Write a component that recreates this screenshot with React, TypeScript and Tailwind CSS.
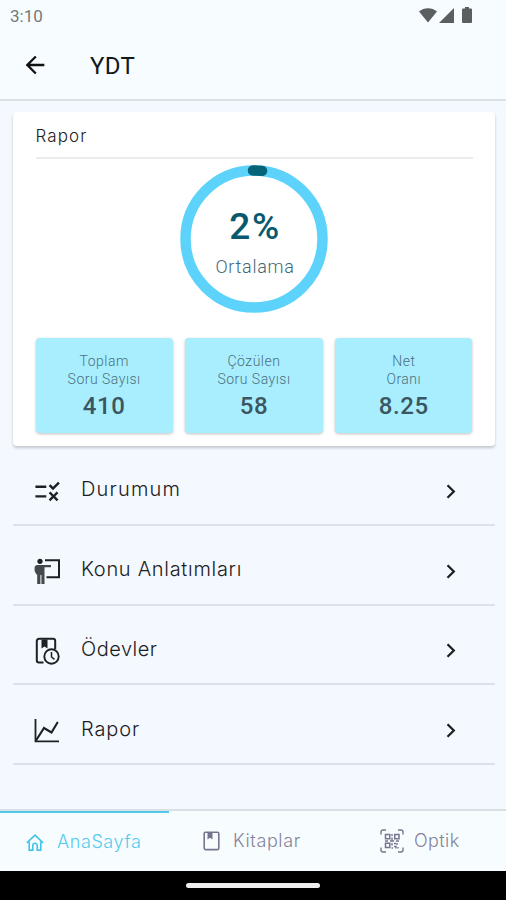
import type { ReactNode } from 'react';
import { MdArrowBack, MdRule } from 'react-icons/md';

type Stat = { top: string; bottom: string; value: string };

type MenuItem = { label: string; icon: ReactNode; spacing: string };

function WifiIcon() {
  return (
    <svg width="18" height="15" viewBox="0 0 18 15" fill="#5b5f60">
      <path d="M0 3.6C2.4 1.3 5.6.2 9 .2s6.600 1.100 9 3.400L9 14.600z" />
    </svg>
  );
}

function SignalIcon() {
  return (
    <svg width="15" height="15" viewBox="0 0 15 15" fill="#5b5f60">
      <path d="M15 0v15H0z" />
    </svg>
  );
}

function BatteryIcon() {
  return (
    <svg width="10" height="16" viewBox="0 0 10 16" fill="#5b5f60">
      <path d="M3 0h4v1.500h2a1 1 0 0 1 1 1V15a1 1 0 0 1-1 1H1a1 1 0 0 1-1-1V2.500a1 1 0 0 1 1-1h2z" />
    </svg>
  );
}

function TrainingIcon() {
  return (
    <svg width="27" height="27" viewBox="0 0 27 27" fill="none">
      <path d="M11 2.200h14v17H12.500" stroke="#1c2124" strokeWidth="2" />
      <circle cx="6" cy="3.300" r="2.600" fill="#1c2124" />
      <path
        d="M3.500 7H17v2.300h-6.500V26H7.400v-9h-1v9H3.200V16.500H2.500L.6 13V9.500Q.8 7 3.500 7z"
        fill="#43494c"
      />
    </svg>
  );
}

function BookClockIcon() {
  return (
    <svg width="25" height="28" viewBox="0 0 25 28" fill="none" stroke="#1c2124" strokeWidth="2">
      <path d="M8.500 25.500H4A2.200 2.200 0 0 1 1.800 23.300V4A2.200 2.200 0 0 1 4 1.800h14A2.200 2.200 0 0 1 20.200 4v8" />
      <path d="M6.500 2.500h6v9l-3-2-3 2z" fill="#1c2124" stroke="none" />
      <circle cx="16.500" cy="19.500" r="7.200" strokeWidth="1.900" />
      <path d="M16.500 15v5l3 2.300" strokeWidth="1.500" />
    </svg>
  );
}

function ChartIcon() {
  return (
    <svg width="26" height="24" viewBox="0 0 26 24" fill="none" stroke="#1c2124">
      <path d="M1.500 0v22.300H25" strokeWidth="1.800" />
      <path d="M2 21.500l8-12.500 7.500 4.500 6.300-10.500" strokeWidth="2.100" />
    </svg>
  );
}

function HomeIcon() {
  return (
    <svg width="18" height="17" viewBox="0 0 18 17" fill="none" stroke="#45c3e8" strokeWidth="1.600">
      <path d="M.8 8.800L9 1.200l8.200 7.600" />
      <path d="M3.200 7.500v8.600h3.600v-4.600a2.200 2.200 0 0 1 4.400 0v4.600h3.600V7.500" />
    </svg>
  );
}

function BookIcon() {
  return (
    <svg width="17" height="20" viewBox="0 0 17 20" fill="none">
      <rect x="1.200" y="1.200" width="14.600" height="17.400" rx="1.300" stroke="#77758d" strokeWidth="1.600" />
      <path d="M4.500 1.500h5v7L7 6.700 4.500 8.500z" fill="#77758d" />
    </svg>
  );
}

function QrIcon() {
  return (
    <svg width="24" height="24" viewBox="0 0 24 24" fill="none" stroke="#77758d" strokeWidth="1.400">
      <path d="M1 5.500V3a2 2 0 0 1 2-2h3M18 1h3a2 2 0 0 1 2 2v2.500M1 18.500V21a2 2 0 0 0 2 2h3M18 23h3a2 2 0 0 0 2-2v-2.500" />
      <path d="M5.500 5.500h4.300v4.300H5.500zM14.700 5.500H19v4.300h-4.300zM5.500 14.200h4.300v4.300H5.500z" strokeWidth="1.500" />
      <path d="M12 5v2M12 8.500v3M5 12h3M10 12h4M16 12h3M12 14v2.500M14 14.500h2M17 14v2M14 17.500h2v2M18 18v1.500M11.500 19h1.500" />
    </svg>
  );
}

function ChevronIcon() {
  return (
    <svg width="10" height="15" viewBox="0 0 10 15" fill="none" stroke="#1c2124" strokeWidth="2.300">
      <path d="M1.500 1.300l6.300 6.200-6.300 6.200" />
    </svg>
  );
}

const stats: Stat[] = [
  { top: 'Toplam', bottom: 'Soru Sayısı', value: '410' },
  { top: 'Çözülen', bottom: 'Soru Sayısı', value: '58' },
  { top: 'Net', bottom: 'Oranı', value: '8.25' },
];

const menuItems: MenuItem[] = [
  { label: 'Durumum', icon: <MdRule size={29} color="#1c2124" />, spacing: 'tracking-[1.2px]' },
  { label: 'Konu Anlatımları', icon: <TrainingIcon />, spacing: 'tracking-[0.7px]' },
  { label: 'Ödevler', icon: <BookClockIcon />, spacing: 'tracking-[0.5px]' },
  { label: 'Rapor', icon: <ChartIcon />, spacing: 'tracking-[0.9px]' },
];

function StatCard({ top, bottom, value }: Stat) {
  return (
    <div className="flex h-[95px] flex-1 flex-col items-center rounded bg-[#a8eeff] pt-[14px] shadow-[0_1px_3px_rgba(0,0,0,0.25)]">
      <div className="text-center text-sm leading-[18px] font-[350] tracking-[0.5px] text-[#4b6f7d]">
        {top}
        <br />
        {bottom}
      </div>
      <div className="mt-1 text-2xl leading-7 font-[550] tracking-[0.6px] text-[#3c5661]">{value}</div>
    </div>
  );
}

function AverageRing() {
  return (
    <div className="relative mx-auto mt-[6px] h-[148px] w-[148px]">
      <svg width="148" height="148" viewBox="0 0 148 148" fill="none">
        <circle cx="74" cy="74" r="68.500" stroke="#5dd3fc" strokeWidth="10.500" />
        <path d="M73 5.500a68.500 68.500 0 0 1 9 .4" stroke="#076378" strokeWidth="10.500" strokeLinecap="round" />
      </svg>
      <div className="absolute inset-0 flex flex-col items-center pt-[41px] pl-[2px]">
        <span className="text-[37px] leading-[42px] font-[550] tracking-[1.500px] text-[#08596d]">2%</span>
        <span className="mt-[7px] text-lg leading-6 font-[350] tracking-[0.700px] text-[#3f6877]">Ortalama</span>
      </div>
    </div>
  );
}

function App() {
  return (
    <div className="flex h-[900px] w-[506px] flex-col bg-[#f4f9ff] font-['Roboto',sans-serif]">
      {/* Status bar and title */}
      <header className="h-[101px] border-b-2 border-[#d8e1e5] bg-[#f6fcff]">
        <div className="flex h-8 items-center justify-between pr-[34px] pl-[10px]">
          <span className="text-[17px] leading-5 text-[#74797b]">3:10</span>
          <div className="flex items-center pb-[2px]">
            <WifiIcon />
            <span className="ml-[2px]"><SignalIcon /></span>
            <span className="ml-2"><BatteryIcon /></span>
          </div>
        </div>
        <div className="flex h-[66px] items-center pl-[21px]">
          <MdArrowBack size={28} color="#111" />
          <h1 className="mt-[2px] ml-[41px] text-2xl leading-7 font-[450] tracking-[0.3px] text-[#151718]">YDT</h1>
        </div>
      </header>

      <main className="flex-1 pt-[11px] pr-[11px] pl-[13px]">
        <section className="h-[334px] w-[482px] rounded bg-white px-[22.500px] pt-px shadow-[0_2px_3px_rgba(0,0,0,0.2)]">
          <h2 className="h-[46px] border-b-2 border-[#ececec] pt-[11px] font-['Inter',sans-serif] text-[17px] leading-6 font-light tracking-[1.100px] text-[#222]">
            Rapor
          </h2>
          <AverageRing />
          <div className="mt-[25px] flex gap-[12.500px]">
            {stats.map((stat) => (
              <StatCard key={stat.top} {...stat} />
            ))}
          </div>
        </section>

        <nav>
          {menuItems.map((item) => (
            <button
              key={item.label}
              className="flex h-[79.800px] w-full items-center border-b-2 border-[#dce1ea] pt-[13px] pr-[39px] pl-[19px] text-left"
            >
              <span className="flex w-[30px] justify-center">{item.icon}</span>
              <span
                className={`ml-[19px] flex-1 pb-1 font-['Inter',sans-serif] text-xl leading-7 font-light text-[#1d2022] ${item.spacing}`}
              >
                {item.label}
              </span>
              <ChevronIcon />
            </button>
          ))}
        </nav>
      </main>

      {/* Bottom tabs */}
      <footer className="flex h-[62px] border-t-2 border-[#d9e0e3] bg-[#f7fdff] font-['Inter',sans-serif] text-lg leading-6 font-light">
        <div className="flex w-[169px] items-center border-t-2 border-[#53c7ea] pl-[26px] text-[#56caec]">
          <HomeIcon />
          <span className="ml-[13px] tracking-[0.600px]">AnaSayfa</span>
        </div>
        <div className="flex w-[169px] items-center pl-[34px] text-[#85839a]">
          <BookIcon />
          <span className="ml-[13px] tracking-[0.600px]">Kitaplar</span>
        </div>
        <div className="flex flex-1 items-center pl-[42px] text-[#85839a]">
          <QrIcon />
          <span className="ml-[10px] tracking-[0.400px]">Optik</span>
        </div>
      </footer>
      <div className="flex h-[29px] justify-center bg-black pt-3">
        <div className="h-[5px] w-[134px] rounded-sm bg-[#eee]" />
      </div>
    </div>
  );
}

export default App;
